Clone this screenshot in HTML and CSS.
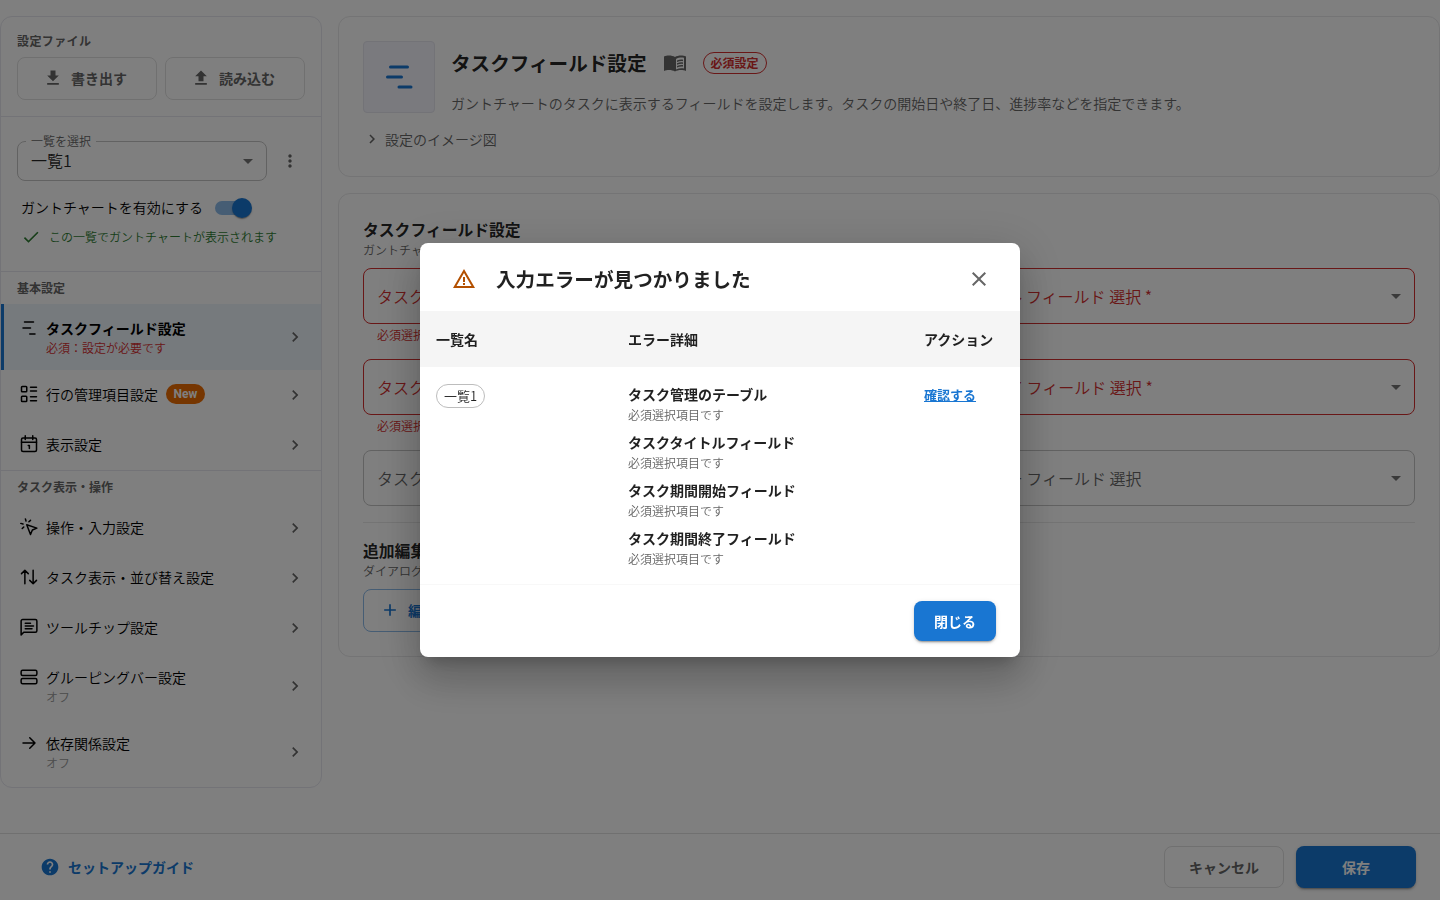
FILE: index.html
```html
<!DOCTYPE html>
<html lang="ja">
<head>
    <meta charset="UTF-8">
    <meta name="viewport" content="width=device-width, initial-scale=1.0">
    <title>タスクフィールド設定</title>
    <link rel="stylesheet" href="styles.css">
</head>
<body>
    <div class="page">
        <div class="content">
            <aside class="sidebar">
                <section class="side-files">
                    <p class="side-title">設定ファイル</p>
                    <div class="file-buttons">
                        <button class="btn btn-gray">
                            <svg class="icon-20" viewBox="0 0 24 24"><path d="M19 9h-4V3H9v6H5l7 7zM5 18v2h14v-2z"/></svg>
                            書き出す
                        </button>
                        <button class="btn btn-gray">
                            <svg class="icon-20" viewBox="0 0 24 24"><path d="M9 16h6v-6h4l-7-7-7 7h4zm-4 2h14v2H5z"/></svg>
                            読み込む
                        </button>
                    </div>
                </section>

                <section class="side-view">
                    <div class="view-row">
                        <div class="view-select">
                            <span class="float-label">一覧を選択</span>
                            <span>一覧1</span>
                            <svg class="arrow" viewBox="0 0 24 24"><path d="m7 10 5 5 5-5z"/></svg>
                        </div>
                        <svg class="more" viewBox="0 0 24 24"><path d="M12 8c1.1 0 2-.9 2-2s-.9-2-2-2-2 .9-2 2 .9 2 2 2m0 2c-1.1 0-2 .9-2 2s.9 2 2 2 2-.9 2-2-.9-2-2-2m0 6c-1.1 0-2 .9-2 2s.9 2 2 2 2-.9 2-2-.9-2-2-2"/></svg>
                    </div>
                    <div class="switch-row">
                        <span>ガントチャートを有効にする</span>
                        <span class="switch"></span>
                    </div>
                    <p class="enabled-note">
                        <svg viewBox="0 0 24 24"><path d="M9 16.17 4.83 12l-1.42 1.41L9 19 21 7l-1.41-1.41z"/></svg>
                        この一覧でガントチャートが表示されます
                    </p>
                </section>

                <nav class="side-nav">
                    <p class="side-title">基本設定</p>
                    <a class="nav-item tall active">
                        <svg class="nav-icon line" viewBox="0 0 24 24"><path d="M6 4h12M4 12h10M13 20h7"/></svg>
                        <span class="nav-text">タスクフィールド設定<small class="error">必須：設定が必要です</small></span>
                        <svg class="chevron" viewBox="0 0 24 24"><path d="M10 6 8.590 7.410 13.170 12l-4.580 4.590L10 18l6-6z"/></svg>
                    </a>
                    <a class="nav-item">
                        <svg class="nav-icon line" viewBox="0 0 24 24"><rect x="2" y="2" width="7" height="7" rx="1"/><rect x="2" y="15" width="7" height="7" rx="1"/><path d="M14 3h8M14 8h8M14 15.500h8M14 21h8"/></svg>
                        <span class="nav-text">行の管理項目設定</span>
                        <span class="new-badge">New</span>
                        <svg class="chevron" viewBox="0 0 24 24"><path d="M10 6 8.590 7.410 13.170 12l-4.580 4.590L10 18l6-6z"/></svg>
                    </a>
                    <a class="nav-item">
                        <svg class="nav-icon line" viewBox="0 0 24 24"><rect x="2" y="4" width="20" height="18" rx="2"/><path d="M2 9.500h20M7 1v5M17 1v5M11 14h1.500v4"/></svg>
                        <span class="nav-text">表示設定</span>
                        <svg class="chevron" viewBox="0 0 24 24"><path d="M10 6 8.590 7.410 13.170 12l-4.580 4.590L10 18l6-6z"/></svg>
                    </a>
                </nav>

                <nav class="side-nav">
                    <p class="side-title">タスク表示・操作</p>
                    <a class="nav-item">
                        <svg class="nav-icon line" viewBox="0 0 24 24"><path d="m9 9 5 13 2.500-6 6-2.500zM7.200 1.200 8 4M4 8l-2.900-.8M14 3.100 11.900 5M5 11.900 3 14"/></svg>
                        <span class="nav-text">操作・入力設定</span>
                        <svg class="chevron" viewBox="0 0 24 24"><path d="M10 6 8.590 7.410 13.170 12l-4.580 4.590L10 18l6-6z"/></svg>
                    </a>
                    <a class="nav-item">
                        <svg class="nav-icon line" viewBox="0 0 24 24"><path d="M6.500 21V3M2 7.500 6.500 3 11 7.500M17.500 3v18M13 16.500l4.500 4.500 4.500-4.500"/></svg>
                        <span class="nav-text">タスク表示・並び替え設定</span>
                        <svg class="chevron" viewBox="0 0 24 24"><path d="M10 6 8.590 7.410 13.170 12l-4.580 4.590L10 18l6-6z"/></svg>
                    </a>
                    <a class="nav-item">
                        <svg class="nav-icon line" viewBox="0 0 24 24"><path d="M1.500 22.500V4a2 2 0 0 1 2-2h17a2 2 0 0 1 2 2v13a2 2 0 0 1-2 2H5zM7 7h7M7 10.700h11M7 14.400h9"/></svg>
                        <span class="nav-text">ツールチップ設定</span>
                        <svg class="chevron" viewBox="0 0 24 24"><path d="M10 6 8.590 7.410 13.170 12l-4.580 4.590L10 18l6-6z"/></svg>
                    </a>
                    <a class="nav-item tall">
                        <svg class="nav-icon line" viewBox="0 0 24 24"><rect x="1.500" y="3" width="21" height="7" rx="2"/><rect x="1.500" y="14" width="21" height="7" rx="2"/></svg>
                        <span class="nav-text">グルーピングバー設定<small>オフ</small></span>
                        <svg class="chevron" viewBox="0 0 24 24"><path d="M10 6 8.590 7.410 13.170 12l-4.580 4.590L10 18l6-6z"/></svg>
                    </a>
                    <a class="nav-item tall">
                        <svg class="nav-icon line" viewBox="0 0 24 24"><path d="M4 12h16M13 5l7 7-7 7"/></svg>
                        <span class="nav-text">依存関係設定<small>オフ</small></span>
                        <svg class="chevron" viewBox="0 0 24 24"><path d="M10 6 8.590 7.410 13.170 12l-4.580 4.590L10 18l6-6z"/></svg>
                    </a>
                </nav>
            </aside>

            <main class="main">
                <section class="card intro">
                    <div class="intro-head">
                        <div class="intro-icon">
                            <svg viewBox="0 0 32 32"><path d="M7.500 6h17M4.500 16h14M16 26h12"/></svg>
                        </div>
                        <div class="intro-text">
                            <div class="intro-title">
                                <h1>タスクフィールド設定</h1>
                                <svg class="book" viewBox="0 0 24 24"><path d="M1 5.500C4 4 9 4 12 6c3-2 8-2 11-.5V20c-3-1.500-8-1.500-11 .5-3-2-8-2-11-.5zM13 8v10.500c2.500-1.200 5.500-1.500 8-1V6.800c-2.500-.6-5.500-.3-8 1.200z"/><path d="M14 9.600c2-.9 4-1.200 6-.9v1.500c-2-.3-4 0-6 .9zm0 2.700c2-.9 4-1.200 6-.9v1.500c-2-.3-4 0-6 .9zm0 2.700c2-.9 4-1.200 6-.9v1.500c-2-.3-4 0-6 .9z"/></svg>
                                <span class="required-chip">必須設定</span>
                            </div>
                            <p>ガントチャートのタスクに表示するフィールドを設定します。タスクの開始日や終了日、進捗率などを指定できます。</p>
                        </div>
                    </div>
                    <div class="image-toggle">
                        <svg viewBox="0 0 24 24"><path d="M10 6 8.590 7.410 13.170 12l-4.580 4.590L10 18l6-6z"/></svg>
                        設定のイメージ図
                    </div>
                </section>

                <section class="card fields">
                    <h2>タスクフィールド設定</h2>
                    <p class="sub">ガントチャ</p>
                    <div class="field-grid">
                        <div class="field invalid">
                            <div class="field-box">タスク<svg viewBox="0 0 24 24"><path d="m7 10 5 5 5-5z"/></svg></div>
                            <small>必須選択</small>
                        </div>
                        <div class="field invalid">
                            <div class="field-box">タスクタイトル フィールド 選択 *<svg viewBox="0 0 24 24"><path d="m7 10 5 5 5-5z"/></svg></div>
                        </div>
                        <div class="field invalid">
                            <div class="field-box">タスク<svg viewBox="0 0 24 24"><path d="m7 10 5 5 5-5z"/></svg></div>
                            <small>必須選択</small>
                        </div>
                        <div class="field invalid">
                            <div class="field-box">タスク期間終了 フィールド 選択 *<svg viewBox="0 0 24 24"><path d="m7 10 5 5 5-5z"/></svg></div>
                        </div>
                        <div class="field">
                            <div class="field-box">タスク<svg viewBox="0 0 24 24"><path d="m7 10 5 5 5-5z"/></svg></div>
                        </div>
                        <div class="field">
                            <div class="field-box">タスクユーザー フィールド 選択<svg viewBox="0 0 24 24"><path d="m7 10 5 5 5-5z"/></svg></div>
                        </div>
                    </div>
                    <hr>
                    <h2>追加編集</h2>
                    <p class="sub">ダイアログ</p>
                    <button class="btn btn-add">
                        <svg class="icon-20" viewBox="0 0 24 24"><path d="M19 13h-6v6h-2v-6H5v-2h6V5h2v6h6z"/></svg>
                        編集
                    </button>
                </section>
            </main>
        </div>

        <footer class="footer">
            <a class="guide">
                <svg class="icon-20" viewBox="0 0 24 24"><path d="M12 2C6.480 2 2 6.480 2 12s4.480 10 10 10 10-4.480 10-10S17.520 2 12 2m1 17h-2v-2h2zm2.070-7.750-.9.920C13.450 12.900 13 13.500 13 15h-2v-.5c0-1.100.45-2.100 1.170-2.830l1.240-1.260c.37-.36.59-.86.59-1.410 0-1.100-.9-2-2-2s-2 .9-2 2H8c0-2.210 1.790-4 4-4s4 1.790 4 4c0 .88-.36 1.680-.93 2.250"/></svg>
                セットアップガイド
            </a>
            <div class="footer-buttons">
                <button class="btn btn-gray">キャンセル</button>
                <button class="btn btn-primary">保存</button>
            </div>
        </footer>
    </div>

    <div class="backdrop">
        <div class="dialog">
            <header class="dialog-head">
                <svg class="warning" viewBox="0 0 24 24"><path d="M12 5.990 19.530 19H4.470zM12 2 1 21h22z"/><path d="M13 16h-2v2h2zm0-6h-2v5h2z"/></svg>
                <h2>入力エラーが見つかりました</h2>
                <svg class="close" viewBox="0 0 24 24"><path d="M19 6.410 17.590 5 12 10.590 6.410 5 5 6.410 10.590 12 5 17.590 6.410 19 12 13.410 17.590 19 19 17.590 13.410 12z"/></svg>
            </header>
            <table>
                <thead>
                    <tr>
                        <th class="col-name">一覧名</th>
                        <th class="col-detail">エラー詳細</th>
                        <th>アクション</th>
                    </tr>
                </thead>
                <tbody>
                    <tr>
                        <td><span class="view-chip">一覧1</span></td>
                        <td>
                            <ul>
                                <li>タスク管理のテーブル<small>必須選択項目です</small></li>
                                <li>タスクタイトルフィールド<small>必須選択項目です</small></li>
                                <li>タスク期間開始フィールド<small>必須選択項目です</small></li>
                                <li>タスク期間終了フィールド<small>必須選択項目です</small></li>
                            </ul>
                        </td>
                        <td><a class="check-link">確認する</a></td>
                    </tr>
                </tbody>
            </table>
            <div class="dialog-actions">
                <button class="btn btn-primary">閉じる</button>
            </div>
        </div>
    </div>
</body>
</html>
```
FILE: styles.css
```css
* {
    box-sizing: border-box;
}
body {
    margin: 0;
    font-family: "Noto Sans CJK JP DemiLight", "Noto Sans CJK JP", sans-serif;
    font-size: 14px;
    line-height: 20px;
    color: rgba(0, 0, 0, 0.87);
    background: #fff;
}
h1, h2, p, ul {
    margin: 0;
    padding: 0;
}
h1, h2, th, li, .btn, .side-title, .active, .required-chip, .guide, .check-link {
    font-family: "Noto Sans CJK JP", sans-serif;
    font-weight: 700;
}
svg {
    display: block;
    flex-shrink: 0;
    fill: currentColor;
}
small {
    display: block;
    font-family: "Noto Sans CJK JP DemiLight", "Noto Sans CJK JP", sans-serif;
    font-size: 12px;
    font-weight: 400;
}
.page {
    height: 100vh;
    display: flex;
    flex-direction: column;
    overflow: hidden;
}
.content {
    flex: 1;
    display: flex;
    align-items: flex-start;
    gap: 16px;
    padding-top: 16px;
}

/* Buttons */
.btn {
    display: flex;
    align-items: center;
    justify-content: center;
    gap: 8px;
    height: 43px;
    padding: 0;
    border: 1px solid #e0e0e0;
    border-radius: 8px;
    background: none;
    font-size: 14px;
    line-height: 24px;
}
.btn-gray {
    color: #666;
}
.btn-primary {
    border: 0;
    background: #1976d2;
    color: #fff;
    box-shadow: 0 3px 1px -2px rgba(0, 0, 0, 0.2), 0 2px 2px rgba(0, 0, 0, 0.14), 0 1px 5px rgba(0, 0, 0, 0.12);
}
.icon-20 {
    width: 20px;
    height: 20px;
}

/* Sidebar */
.sidebar {
    width: 322px;
    height: 772px;
    border: 1px solid #e6e6ee;
    border-radius: 12px;
    overflow: hidden;
}
.side-title {
    padding-left: 16px;
    font-size: 12px;
    line-height: 18px;
    color: #666;
}
.side-files {
    height: 100px;
    padding-top: 15px;
    border-bottom: 1px solid #e6e6ee;
}
.side-files .side-title {
    letter-spacing: 0.4px;
}
.file-buttons {
    display: flex;
    gap: 8px;
    padding: 7px 16px 0;
}
.file-buttons .btn {
    flex: 1;
    padding-right: 4px;
    padding-bottom: 2px;
}
.side-view {
    height: 155px;
    padding: 24px 16px 0;
    border-bottom: 1px solid #e6e6ee;
}
.view-row {
    display: flex;
    align-items: center;
    gap: 13px;
}
.view-select {
    position: relative;
    display: flex;
    align-items: center;
    justify-content: space-between;
    width: 250px;
    height: 40px;
    padding: 0 6px 0 13px;
    border: 1px solid #c4c4c4;
    border-radius: 8px;
    font-size: 16px;
}
.view-select span {
    margin-bottom: 2px;
}
.float-label {
    position: absolute;
    top: -11px;
    left: 8px;
    padding: 0 5px;
    background: #fff;
    font-size: 12px;
    color: #666;
}
.arrow {
    width: 24px;
    height: 24px;
    color: #757575;
}
.more {
    width: 20px;
    height: 20px;
    color: #666;
}
.switch-row {
    display: flex;
    align-items: center;
    gap: 12px;
    height: 20px;
    margin-top: 17px;
    padding-left: 4px;
    color: #000;
}
.switch-row span:first-child {
    margin-bottom: 2px;
}
.switch {
    position: relative;
    width: 34px;
    height: 14px;
    border-radius: 7px;
    background: #8cbae8;
}
.switch::after {
    content: "";
    position: absolute;
    top: -3px;
    right: -3px;
    width: 20px;
    height: 20px;
    border-radius: 50%;
    background: #1976d2;
    box-shadow: 0 2px 1px -1px rgba(0, 0, 0, 0.2), 0 1px 1px rgba(0, 0, 0, 0.14), 0 1px 3px rgba(0, 0, 0, 0.12);
}
.enabled-note {
    display: flex;
    align-items: center;
    gap: 8px;
    margin-top: 9px;
    padding-left: 4px;
    font-size: 12px;
    color: #2e7d32;
}
.enabled-note svg {
    width: 20px;
    height: 20px;
}
.side-nav {
    padding-top: 7px;
}
.side-nav + .side-nav {
    border-top: 1px solid #e6e6ee;
}
.side-nav .side-title {
    margin-bottom: 7px;
}
.nav-item {
    display: flex;
    align-items: center;
    height: 50px;
    padding: 0 17px 0 19px;
    color: #000;
}
.nav-item.tall {
    height: 66px;
}
.nav-item.active {
    padding-left: 16px;
    border-left: 3px solid #1976d2;
    background: #edf4fb;
}
.nav-icon {
    width: 18px;
    height: 18px;
    margin: 0 8px 2px 1px;
    margin-left: 0;
}
.tall .nav-icon {
    align-self: flex-start;
    margin-top: 15px;
}
.line {
    fill: none;
    stroke: currentColor;
    stroke-width: 2;
    stroke-linecap: round;
    stroke-linejoin: round;
}
.nav-text {
    margin-bottom: 2px;
}
.tall .nav-text {
    margin: 2px 0 0;
}
.nav-text small {
    color: #999;
}
.nav-text .error {
    color: #d32f2f;
}
.new-badge {
    height: 20px;
    margin: 0 0 2px 8px;
    padding: 0 7.5px;
    border-radius: 10px;
    background: #ed6c02;
    font-family: Roboto, sans-serif;
    font-size: 12px;
    font-weight: 700;
    color: #fff;
}
.chevron {
    width: 20px;
    height: 20px;
    margin-left: auto;
    margin-right: -1px;
    color: #666;
}

/* Main area */
.main {
    flex: 1;
    display: flex;
    flex-direction: column;
    gap: 16px;
}
.card {
    padding: 24px;
    border: 1px solid #e8e8ea;
    border-radius: 12px;
}
.intro {
    height: 161px;
}
.intro-head {
    display: flex;
    gap: 16px;
}
.intro-icon {
    display: flex;
    align-items: center;
    justify-content: center;
    width: 72px;
    height: 72px;
    border: 1px solid #e6e6ee;
    border-radius: 4px;
    background: #f4f4fd;
}
.intro-icon svg {
    width: 32px;
    height: 32px;
    fill: none;
    stroke: #1976d2;
    stroke-width: 3;
    stroke-linecap: round;
}
.intro-title {
    display: flex;
    align-items: center;
    height: 44px;
}
.intro-title h1 {
    font-size: 19.6px;
}
.book {
    width: 24px;
    height: 24px;
    margin: 0 16px;
    fill-rule: evenodd;
    color: #666;
}
.required-chip {
    padding: 0 7px;
    border: 1px solid #d32f2f;
    border-radius: 11px;
    font-size: 12px;
    color: #d32f2f;
}
.intro-text p {
    margin-top: 8px;
    color: #666;
}
.image-toggle {
    display: flex;
    align-items: center;
    gap: 4px;
    margin-top: 16px;
    color: #666;
}
.image-toggle svg {
    width: 18px;
    height: 18px;
}
.fields {
    height: 464px;
}
.fields h2 {
    font-size: 15.8px;
    line-height: 24px;
}
.sub {
    font-size: 12px;
    line-height: 16px;
    color: #666;
}
.field-grid {
    display: grid;
    grid-template-columns: 1fr 1fr;
    column-gap: 16px;
    grid-auto-rows: 91px;
    height: 238px;
    margin-top: 10px;
}
.field-box {
    display: flex;
    align-items: center;
    justify-content: space-between;
    height: 56px;
    padding: 0 6px 0 13px;
    border: 1px solid #c4c4c4;
    border-radius: 8px;
    font-size: 16px;
    line-height: 18px;
    color: #666;
}
.field-box svg {
    width: 24px;
    height: 24px;
    color: #757575;
}
.field.invalid .field-box {
    border-color: #d32f2f;
    color: #d32f2f;
}
.field.invalid .field-box svg {
    color: #757575;
}
.field small {
    margin: 1px 14px 0;
    color: #d32f2f;
}
hr {
    margin: 16px 0;
    border: 0;
    border-top: 1px solid #e8e8e8;
}
.btn-add {
    justify-content: flex-start;
    width: 200px;
    margin-top: 10px;
    padding: 0 0 2px 16px;
    border-color: #8cbae8;
    color: #1976d2;
}

/* Footer */
.footer {
    display: flex;
    align-items: center;
    justify-content: space-between;
    height: 67px;
    padding: 0 24px 0 40px;
    border-top: 1px solid #e0e0e0;
}
.guide {
    display: flex;
    align-items: center;
    gap: 8px;
    color: #1976d2;
}
.footer-buttons {
    display: flex;
    gap: 12px;
}
.footer .btn {
    width: 120px;
    height: 42px;
}

/* Error dialog */
.backdrop {
    position: fixed;
    inset: 0;
    display: flex;
    align-items: center;
    justify-content: center;
    background: rgba(0, 0, 0, 0.5);
}
.dialog {
    width: 600px;
    height: 414px;
    border-radius: 8px;
    background: #fff;
    box-shadow: 0 11px 15px -7px rgba(0, 0, 0, 0.2), 0 24px 38px 3px rgba(0, 0, 0, 0.14), 0 9px 46px 8px rgba(0, 0, 0, 0.12);
}
.dialog-head {
    display: flex;
    align-items: center;
    height: 68px;
    padding: 4px 29px 0 32px;
}
.dialog-head h2 {
    flex: 1;
    margin-left: 20px;
    font-size: 19.6px;
}
.warning {
    width: 24px;
    height: 24px;
    color: #b35000;
}
.close {
    width: 24px;
    height: 24px;
    color: #666;
}
table {
    width: 100%;
    border-collapse: separate;
    border-spacing: 0;
    table-layout: fixed;
}
.col-name {
    width: 192px;
}
.col-detail {
    width: 296px;
}
th {
    height: 56px;
    padding: 0 16px;
    background: #f5f5f5;
    text-align: left;
}
td {
    height: 218px;
    padding: 17px 16px 0;
    vertical-align: top;
    border-bottom: 1px solid #f8f8f8;
}
.view-chip {
    display: inline-block;
    height: 24px;
    padding: 0 7px;
    border: 1px solid #bdbdbd;
    border-radius: 12px;
    font-size: 13px;
    line-height: 22px;
}
li {
    height: 48px;
    list-style: none;
}
li small {
    margin-top: 1px;
    color: #666;
}
.check-link {
    display: block;
    padding-top: 1px;
    font-size: 13px;
    color: #1976d2;
    text-decoration: underline;
}
.dialog-actions {
    display: flex;
    justify-content: flex-end;
    padding: 16px 24px;
}
.dialog-actions .btn {
    width: 82px;
    height: 40px;
}
```
